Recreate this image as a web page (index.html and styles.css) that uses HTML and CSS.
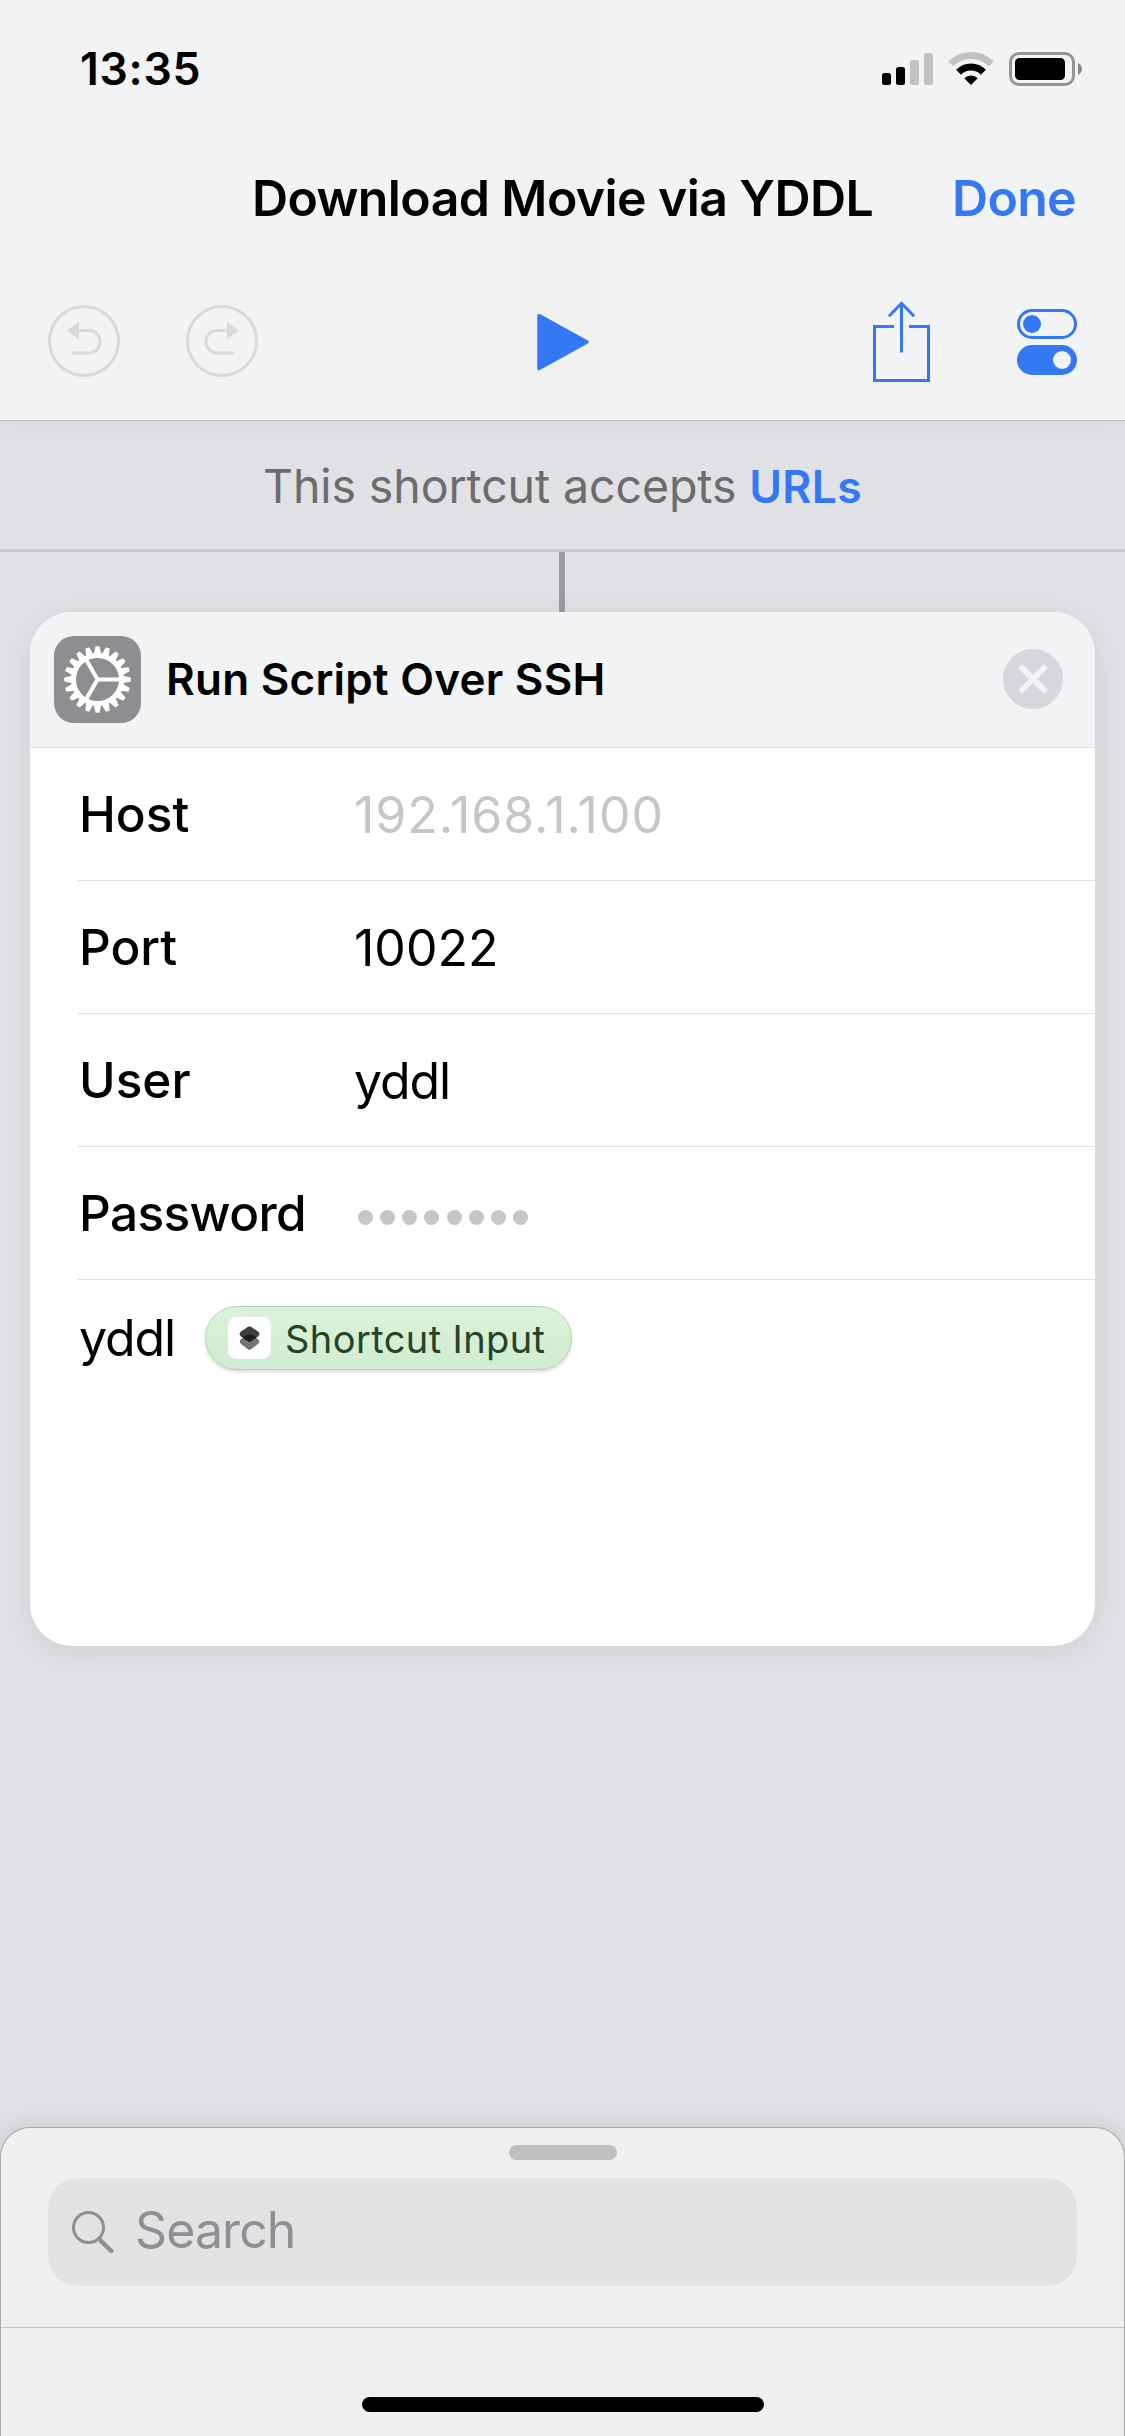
FILE: index.html
```html
<!DOCTYPE html>
<html lang="en">
<head>
<meta charset="utf-8">
<meta name="viewport" content="width=device-width, initial-scale=1">
<title>Download Movie via YDDL</title>
<link rel="stylesheet" href="styles.css">
</head>
<body>
<div class="screen">
  <header class="top">
    <div class="status">
      <span class="time">13:35</span>
      <div class="indicators">
        <svg class="signal" width="51" height="32" viewBox="0 0 51 32">
          <rect x="0" y="20" width="9" height="12" rx="2.5"/>
          <rect x="14" y="14" width="9" height="18" rx="2.5"/>
          <g class="dim"><rect x="28" y="7" width="9" height="25" rx="2.5"/><rect x="42" y="0" width="9" height="32" rx="2.5"/></g>
        </svg>
        <svg class="wifi" width="46" height="34" viewBox="0 0 46 34">
          <g fill="none" stroke-width="7">
            <path class="dim-stroke" d="M2.7 11.8A29 29 0 0 1 43.3 11.8"/>
            <path stroke="#000" d="M10.6 20.2A17.6 17.6 0 0 1 35.4 20.2"/>
          </g>
          <path d="M23 33L16.3 26.2A9.6 9.6 0 0 1 29.7 26.2Z"/>
        </svg>
        <svg class="battery" width="74" height="34" viewBox="0 0 74 34">
          <rect x="1.5" y="1.5" width="63" height="31" rx="8.5" fill="none" stroke="#949596" stroke-width="3"/>
          <rect x="6" y="6" width="50" height="22" rx="4.5"/>
          <path d="M69 11C74.300 13.500 74.300 20.500 69 23Z" fill="#88898b"/>
        </svg>
      </div>
    </div>
    <div class="nav">
      <h1 class="title">Download Movie via YDDL</h1>
      <span class="done">Done</span>
    </div>
    <div class="toolbar">
      <div class="history">
        <svg width="72" height="72" viewBox="0 0 72 72">
          <g fill="none" stroke="#d9d9da" stroke-width="3"><circle cx="36" cy="36" r="34.5"/><path d="M30 25.500H42A11.300 11.300 0 0 1 42 48H24"/></g>
          <path d="M18.500 25.500L31 17V34Z" fill="#d9d9da"/>
        </svg>
        <svg width="72" height="72" viewBox="0 0 72 72">
          <g fill="none" stroke="#d9d9da" stroke-width="3"><circle cx="36" cy="36" r="34.5"/><path d="M42 25.500H30A11.300 11.300 0 0 0 30 48H48"/></g>
          <path d="M53.500 25.500L41 17V34Z" fill="#d9d9da"/>
        </svg>
      </div>
      <svg class="play" width="52" height="58" viewBox="0 0 52 58">
        <path d="M2 2.500L50 29L2 55.500Z" fill="#3478f6" stroke="#3478f6" stroke-width="3.500" stroke-linejoin="round"/>
      </svg>
      <div class="actions">
        <svg width="57" height="81" viewBox="0 0 57 81" fill="none" stroke="#3478f6" stroke-width="3">
          <path d="M21 25.500H1.500V79.500H55.500V25.500H36"/>
          <path d="M28.500 2V51.500M15.900 15.200L28.500 2.300L41.100 15.200"/>
        </svg>
        <svg width="60" height="66" viewBox="0 0 60 66">
          <rect x="1.500" y="1.500" width="57" height="27" rx="13.500" fill="none" stroke="#3478f6" stroke-width="3"/>
          <circle cx="15" cy="15" r="9" fill="#3478f6"/>
          <rect x="0" y="36" width="60" height="30" rx="15" fill="#3478f6"/>
          <circle cx="45" cy="51" r="9" fill="#f2f3f5"/>
        </svg>
      </div>
    </div>
  </header>

  <section class="accepts">
    <span class="accepts-text">This shortcut accepts</span>
    <span class="accepts-type">URLs</span>
  </section>

  <div class="connector"></div>

  <main class="card">
    <div class="card-head">
      <svg class="gear" width="87" height="87" viewBox="0 0 87 87">
        <rect width="87" height="87" rx="20" fill="#8e8d92"/>
        <g transform="translate(43.500 43.500)">
          <g id="teeth" fill="#fff">
            <path id="tooth" d="M-3.700 -25L-2 -33.300H2L3.700 -25Z" transform="rotate(90)"/>
            <use href="#tooth" transform="rotate(18)"/><use href="#tooth" transform="rotate(36)"/>
            <use href="#tooth" transform="rotate(54)"/><use href="#tooth" transform="rotate(72)"/>
            <use href="#tooth" transform="rotate(90)"/><use href="#tooth" transform="rotate(108)"/>
            <use href="#tooth" transform="rotate(126)"/><use href="#tooth" transform="rotate(144)"/>
            <use href="#tooth" transform="rotate(162)"/><use href="#tooth" transform="rotate(180)"/>
            <use href="#tooth" transform="rotate(198)"/><use href="#tooth" transform="rotate(216)"/>
            <use href="#tooth" transform="rotate(234)"/><use href="#tooth" transform="rotate(252)"/>
            <use href="#tooth" transform="rotate(270)"/><use href="#tooth" transform="rotate(288)"/>
            <use href="#tooth" transform="rotate(306)"/><use href="#tooth" transform="rotate(324)"/>
            <use href="#tooth" transform="rotate(342)"/>
          </g>
          <circle r="24" fill="none" stroke="#fff" stroke-width="5"/>
          <path d="M0 0H23M0 0L-11.500 -19.900M0 0L-11.500 19.900" stroke="#fff" stroke-width="4"/>
        </g>
      </svg>
      <h2 class="card-title">Run Script Over SSH</h2>
      <svg class="close" width="60" height="60" viewBox="0 0 60 60">
        <circle cx="30" cy="30" r="30" fill="#d5d7dc"/>
        <path d="M19 19L41 41M41 19L19 41" stroke="#f2f3f5" stroke-width="6" stroke-linecap="round"/>
      </svg>
    </div>
    <div class="fields">
      <div class="field"><span class="label">Host</span><span class="value placeholder">192.168.1.100</span></div>
      <div class="field"><span class="label">Port</span><span class="value">10022</span></div>
      <div class="field"><span class="label">User</span><span class="value name">yddl</span></div>
      <div class="field"><span class="label password">Password</span>
        <span class="dots"><i></i><i></i><i></i><i></i><i></i><i></i><i></i><i></i></span></div>
      <div class="script">
        <span class="name">yddl</span>
        <span class="pill">
          <svg width="43" height="42" viewBox="0 0 43 42">
            <rect width="43" height="42" rx="8.500" fill="#fff"/>
            <path d="M13 22L20 18.300Q21.500 17.600 23 18.300L30 22Q32.500 24.500 30 27L23 32.300Q21.500 33.400 20 32.300L13 27Q10.500 24.500 13 22Z" fill="#747474"/>
            <path d="M13 14.500L20 9.700Q21.500 8.800 23 9.700L30 14.500Q32.800 17 30 19.500L23 24.300Q21.500 25.300 20 24.300L13 19.500Q10.200 17 13 14.500Z" fill="#3e3e3e"/>
            <path d="M14.500 20.500Q21.500 14.500 28.500 20.500L23 24.300Q21.500 25.300 20 24.300Z" fill="#1c1c1c"/>
          </svg>
          <span class="pill-text">Shortcut Input</span>
        </span>
      </div>
    </div>
  </main>

  <footer class="sheet">
    <div class="handle"></div>
    <div class="search">
      <svg width="42" height="42" viewBox="0 0 42 42" fill="none" stroke="#8e8e93" stroke-linecap="round">
        <circle cx="16.500" cy="16.500" r="15" stroke-width="3"/>
        <path d="M28.300 29.300L39.300 40" stroke-width="4.500"/>
      </svg>
      <span class="search-text">Search</span>
    </div>
    <div class="home-area"><div class="home"></div></div>
  </footer>
</div>
</body>
</html>
```
FILE: styles.css
```css
* { box-sizing: border-box; }

body {
  margin: 0;
  font-family: Inter, "Liberation Sans", sans-serif;
  color: #000;
}

h1, h2 { margin: 0; font-weight: 600; }
svg { display: block; flex: none; overflow: visible; }
span { white-space: nowrap; }

.screen {
  width: 1125px;
  height: 2436px;
  display: flex;
  flex-direction: column;
  background: #e0e1e5;
  overflow: hidden;
}

/* Header */
.top {
  height: 421px;
  flex: none;
  border-bottom: 1px solid #c1c2c6;
  background: linear-gradient(90deg, #f2f3f5 0, #f2f3f5 38%, #f2f3f3 45%, #f2f1f1 47%, #f2f1f1 53%, #f2f3f3 55%, #f2f3f5 62%);
  box-shadow: 0 0 32px rgba(0, 0, 0, 0.05);
}

.status {
  height: 138px;
  display: flex;
  justify-content: space-between;
  align-items: center;
  padding: 0 42px 0 80px;
}
.time { font-size: 44.5px; font-weight: 600; letter-spacing: 0.7px; }
.indicators { display: flex; align-items: center; }
.dim { fill: #c2c2c3; }
.dim-stroke { stroke: #c2c2c3; }
.wifi { margin-left: 15px; }
.battery { margin-left: 15px; }

.nav {
  height: 120px;
  display: grid;
  grid-template-columns: 1fr auto 1fr;
  align-items: center;
  padding: 0 49px;
}
.title { grid-column: 2; font-size: 50px; letter-spacing: -0.6px; white-space: nowrap; }
.done { justify-self: end; font-size: 50px; font-weight: 600; letter-spacing: -0.7px; color: #3478f6; }

.toolbar {
  height: 162px;
  display: grid;
  grid-template-columns: 1fr auto 1fr;
  align-items: center;
  padding: 5px 48px 0;
}
.history { display: flex; gap: 66px; margin-top: -1px; }
.actions { display: flex; gap: 87px; justify-self: end; align-items: center; }
.play { margin-top: 1px; }

/* Input type banner */
.accepts {
  height: 131px;
  flex: none;
  display: flex;
  justify-content: center;
  align-items: baseline;
  gap: 13px;
  padding-top: 37px;
  border-bottom: 3px solid #c9cacf;
}
.accepts-text { font-size: 46.5px; letter-spacing: -0.12px; color: #6c6c6d; }
.accepts-type { font-size: 44.5px; font-weight: 600; letter-spacing: 0.3px; color: #3478f6; }

.connector {
  width: 6px;
  height: 60px;
  flex: none;
  align-self: center;
  margin-right: 1px;
  background: #9a9ba4;
}

/* Action card */
.card {
  height: 1034px;
  flex: none;
  margin: 0 30px;
  border-radius: 42px;
  background: #fff;
  box-shadow: 0 6px 32px rgba(0, 0, 0, 0.08);
}
.card-head {
  height: 136px;
  display: flex;
  align-items: center;
  padding: 0 32px 0 24px;
  border-bottom: 1px solid #dfe0e2;
  border-radius: 42px 42px 0 0;
  background: #f2f3f5;
}
.card-title { flex: 1; padding: 0 0 2px 25px; font-size: 44px; letter-spacing: 0.25px; }
.close { margin-top: -1px; }

.fields { padding-left: 48px; }
.field {
  height: 133px;
  display: flex;
  align-items: center;
  border-bottom: 1px solid #e0e0e2;
}
.label { width: 276px; padding-left: 1px; font-size: 49.5px; font-weight: 500; letter-spacing: 0; }
.label.password { letter-spacing: -0.6px; }
.value { padding-top: 2px; font-size: 50px; letter-spacing: 0; }
.placeholder { letter-spacing: 1px; color: #c6c6ca; }
.name { font-size: 50px; letter-spacing: -1.1px; }
.dots { display: flex; gap: 7.15px; padding: 8px 0 0 4px; }
.dots i { width: 15px; height: 15px; border-radius: 50%; background: #c6c6ca; }

.script { display: flex; align-items: center; gap: 30px; padding: 26px 0 0 1px; }
.pill {
  width: 367px;
  height: 64px;
  display: flex;
  align-items: center;
  gap: 14px;
  padding-left: 22px;
  border: 1px solid #b3d2b5;
  border-radius: 32px;
  background: linear-gradient(#dbf3da, #d0ebcf);
  box-shadow: 0 2px 3px rgba(0, 0, 0, 0.15);
}
.pill-text { padding-top: 2px; font-size: 38px; letter-spacing: 0.4px; color: #27422a; }

/* Search sheet */
.sheet {
  height: 309px;
  flex: none;
  margin-top: auto;
  display: flex;
  flex-direction: column;
  border: 1px solid #a8a9aa;
  border-bottom: 0;
  border-radius: 30px 30px 0 0;
  background: #efefef;
  box-shadow: 0 0 24px rgba(0, 0, 0, 0.12);
}
.handle {
  width: 108px;
  height: 15px;
  margin: 17px auto 18px;
  border-radius: 8px;
  background: #bfbfbf;
}
.search {
  height: 108px;
  display: flex;
  align-items: center;
  gap: 21px;
  margin: 0 47px;
  padding-left: 24px;
  border-radius: 30px;
  background: #e2e2e4;
}
.search-text { padding-bottom: 4px; font-size: 50px; letter-spacing: -0.9px; color: #8e8e93; }
.home-area {
  flex: 1;
  margin-top: 41px;
  padding-top: 69px;
  border-top: 1px solid #c3c4c5;
}
.home { width: 402px; height: 15px; margin: 0 auto; border-radius: 8px; background: #000; }
```
